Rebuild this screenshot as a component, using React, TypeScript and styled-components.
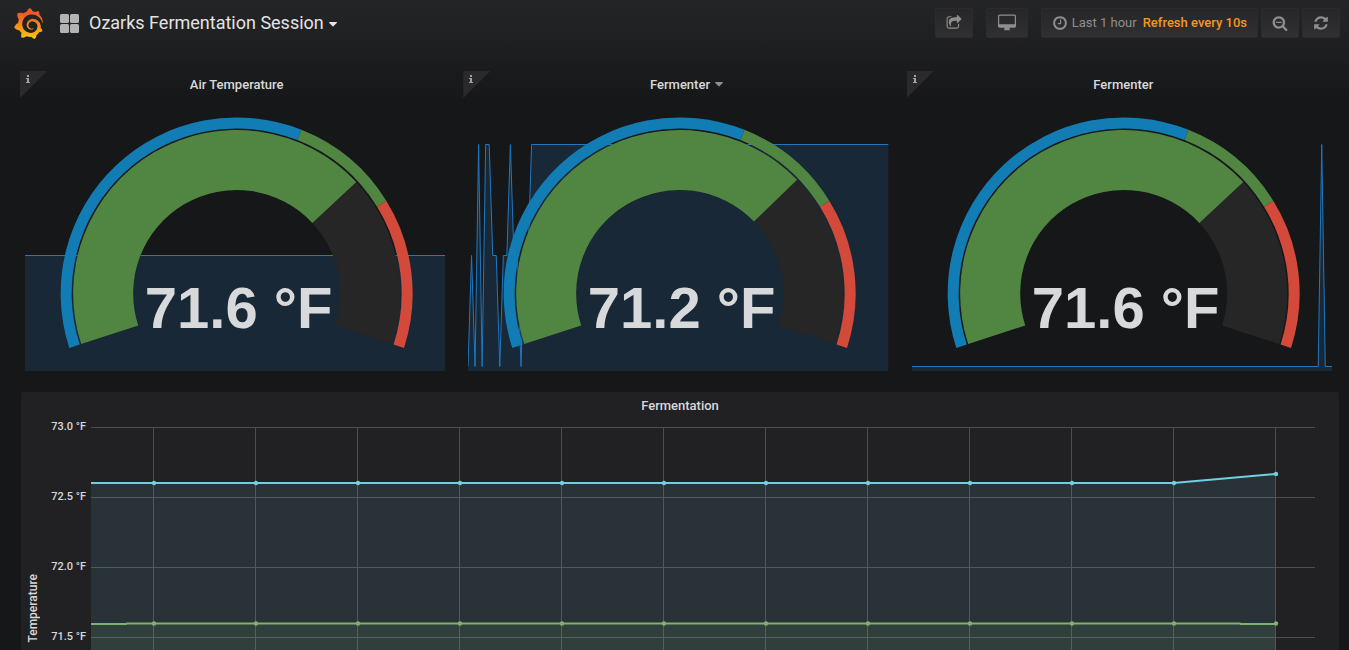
import React from "react";
import styled, { createGlobalStyle } from "styled-components";
import { SiGrafana } from "react-icons/si";

const GlobalStyle = createGlobalStyle`
  *, *::before, *::after { box-sizing: border-box; }
  body {
    margin: 0;
    background: #161719;
    color: #d8d9da;
    font-family: Roboto, "Liberation Sans", sans-serif;
    font-size: 13px;
  }
  button { font: inherit; color: inherit; cursor: pointer; }
`;

const Page = styled.div`
  display: flex;
  flex-direction: column;
  height: 100vh;
  overflow: hidden;
  background: linear-gradient(180deg, #222426 10px, #161719 100px);
`;

const NavBar = styled.header`
  display: flex;
  align-items: center;
  flex: none;
  height: 46px;
  padding: 0 9px 0 13px;
`;

const LogoLink = styled.a`
  display: flex;
  margin-right: 16px;
`;

const Heading = styled.h1`
  margin: 0;
  font-size: 18px;
  font-weight: 400;
`;

const DashboardPicker = styled.button`
  display: flex;
  align-items: center;
  gap: 10px;
  padding: 0;
  border: 0;
  background: none;
  line-height: 30px;
  color: #e3e3e3;
`;

const PickerLabel = styled.span`
  display: flex;
  align-items: center;
  gap: 5px;

  svg { margin-top: 3px; }
`;

const Actions = styled.div`
  display: flex;
  gap: 13px;
  margin-left: auto;
`;

const ButtonGroup = styled.div`
  display: flex;
  gap: 3px;
`;

const NavButton = styled.button<{ $pad?: number }>`
  display: flex;
  align-items: center;
  justify-content: center;
  gap: 4px;
  height: 30px;
  padding: 0 ${(p) => p.$pad ?? 10}px 1px;
  border: 1px solid #2c2c2f;
  border-radius: 2px;
  background: linear-gradient(180deg, #262628, #303032);
  color: #8e8e8e;
  font-weight: 500;
  white-space: nowrap;
`;

const RangeText = styled.span`
  margin-right: 2px;
  font-size: 13px;
  font-weight: 400;
`;

const RefreshText = styled.span`
  color: #f79520;
`;

const Dashboard = styled.main`
  display: flex;
  flex: 1;
  flex-direction: column;
  gap: 10px;
  min-height: 0;
  padding: 25px 9px 0 20px;
`;

const PanelRow = styled.div`
  display: grid;
  flex: none;
  grid-template-columns: repeat(3, 1fr);
  gap: 10px;
`;

const Panel = styled.section`
  position: relative;
  min-width: 0;
  padding-bottom: 11px;
`;

const PanelTitle = styled.h2`
  display: flex;
  align-items: center;
  justify-content: center;
  height: 27px;
  margin: 0;
  font-size: 13px;
  font-weight: 500;
`;

const TitleCaret = styled.span`
  display: flex;
  flex: none;
  margin: 0 -13px 0 5px;
  color: #8e8e8e;
`;

const InfoCorner = styled.button`
  position: absolute;
  top: 0;
  left: 0;
  display: flex;
  align-items: flex-start;
  width: 27px;
  height: 27px;
  padding: 4px 0 0 6px;
  border: 0;
  background: #2a2a2e;
  clip-path: polygon(0 0, 100% 0, 0 100%);
  color: #a0a0a0;
`;

const Stat = styled.div`
  position: relative;
  height: 273px;
`;

const SparkSvg = styled.svg`
  position: absolute;
  top: 0;
  left: 5px;
  width: calc(100% - 13px);
  height: 273px;
`;

const GaugeSvg = styled.svg`
  position: relative;
  display: block;
  width: 100%;
  height: 273px;
`;

const GaugeValue = styled.text`
  fill: #d8d9da;
  font-family: "Liberation Sans", Arial, sans-serif;
  font-size: 58px;
  font-weight: 700;
  text-anchor: middle;
`;

const GraphPanel = styled.section`
  display: flex;
  flex: 1;
  flex-direction: column;
  min-height: 0;
  margin: 0 1px;
  border-radius: 2px 2px 0 0;
  background: #212124;
`;

const GraphBody = styled.div`
  display: flex;
  flex: 1;
  align-items: flex-start;
  min-height: 0;
  padding: 0 24px 0 4px;
`;

const AxisName = styled.div`
  width: 16px;
  padding-top: 155px;
  font-size: 12px;
  font-weight: 500;
  line-height: 16px;
  writing-mode: vertical-rl;

  span {
    display: block;
    transform: rotate(180deg);
  }
`;

const AxisTicks = styled.ol`
  display: flex;
  flex-direction: column;
  width: 50px;
  margin: 0;
  padding: 1px 5px 0 0;
  list-style: none;
  font-size: 11px;
  font-weight: 500;
  line-height: 14px;
  text-align: right;

  li { flex: 0 0 70px; }
  li:last-child { flex-basis: 14px; }
`;

const PlotSvg = styled.svg`
  display: block;
  flex: 1;
  min-width: 0;
  height: 231px;
`;

const FaIcon = ({ d, size, viewBox = "0 0 1792 1792" }: { d: string; size: number; viewBox?: string }) => (
  <svg width={size} height={size} viewBox={viewBox} fill="currentColor" aria-hidden="true">
    <path d={d} />
  </svg>
);

const icons = {
  share:
    "M1472 989v259q0 119-84.5 203.5t-203.5 84.5h-832q-119 0-203.5-84.5t-84.5-203.5v-832q0-119 84.5-203.5t203.5-84.5h255q13 0 22.5 9.5t9.5 22.5q0 27-26 32-77 26-133 60-10 4-16 4h-112q-66 0-113 47t-47 113v832q0 66 47 113t113 47h832q66 0 113-47t47-113v-214q0-19 18-29 28-13 54-37 16-16 35-8 21 9 21 29zm237-496l-384 384q-18 19-45 19-12 0-25-5-39-17-39-59v-192h-160q-323 0-438 131-119 137-74 473 3 23-20 34-8 2-12 2-16 0-26-13-10-14-21-31t-39.5-68.5-49.5-99.5-38.5-114-17.5-122q0-49 3.5-91t14-90 28-88 47-81.5 68.5-74 94.5-61.5 124.5-48.5 159.5-30.5 196.5-11h160v-192q0-42 39-59 13-5 25-5 26 0 45 19l384 384q19 19 19 45t-19 45z",
  desktop:
    "M1728 992v-832q0-13-9.5-22.5t-22.5-9.5h-1600q-13 0-22.5 9.5t-9.5 22.5v832q0 13 9.5 22.5t22.5 9.5h1600q13 0 22.5-9.5t9.5-22.5zm128-832v1088q0 66-47 113t-113 47h-544q0 37 16 77.5t32 71 16 43.5q0 26-19 45t-45 19h-512q-26 0-45-19t-19-45q0-14 16-44t32-70 16-78h-544q-66 0-113-47t-47-113v-1088q0-66 47-113t113-47h1600q66 0 113 47t47 113z",
  clock:
    "M1024 544v448q0 14-9 23t-23 9h-320q-14 0-23-9t-9-23v-64q0-14 9-23t23-9h224v-352q0-14 9-23t23-9h64q14 0 23 9t9 23zm416 352q0-148-73-273t-198-198-273-73-273 73-198 198-73 273 73 273 198 198 273 73 273-73 198-198 73-273zm224 0q0 209-103 385.5t-279.5 279.5-385.5 103-385.5-103-279.5-279.5-103-385.5 103-385.5 279.5-279.5 385.5-103 385.5 103 279.5 279.5 103 385.5z",
  zoomOut:
    "M1088 800v64q0 13-9.5 22.5t-22.5 9.5h-576q-13 0-22.5-9.5t-9.5-22.5v-64q0-13 9.5-22.5t22.5-9.5h576q13 0 22.5 9.5t9.5 22.5zm128 32q0-185-131.5-316.5t-316.5-131.5-316.5 131.5-131.5 316.5 131.5 316.5 316.5 131.5 316.5-131.5 131.5-316.5zm512 832q0 53-37.5 90.5t-90.5 37.5q-54 0-90-38l-343-342q-179 124-399 124-143 0-273.5-55.5t-225-150-150-225-55.5-273.5 55.5-273.5 150-225 225-150 273.5-55.5 273.5 55.5 225 150 150 225 55.5 273.5q0 220-124 399l343 343q37 37 37 90z",
  refresh:
    "M1639 1056q0 5-1 7-64 268-268 434.5t-478 166.5q-146 0-282.5-55t-243.5-157l-129 129q-19 19-45 19t-45-19-19-45v-448q0-26 19-45t45-19h448q26 0 45 19t19 45-19 45l-137 137q71 66 161 102t187 36q134 0 250-65t186-179q11-17 53-117 8-23 30-23h192q13 0 22.5 9.5t9.5 22.5zm25-800v448q0 26-19 45t-45 19h-448q-26 0-45-19t-19-45 19-45l138-138q-148-137-349-137-134 0-250 65t-186 179q-11 17-53 117-8 23-30 23h-199q-13 0-22.5-9.5t-9.5-22.5v-7q65-268 270-434.5t480-166.5q146 0 284 55.5t245 156.5l130-129q19-19 45-19t45 19 19 45z",
};

const Caret = () => (
  <svg width="8" height="5" viewBox="0 0 8 5" fill="currentColor" aria-hidden="true">
    <path d="M.6 0h6.8q.6 0 .6.5 0 .2-.2.4L4.4 4.3q-.4.4-.8 0L.2.9Q0 .7 0 .5 0 0 .6 0z" />
  </svg>
);

const InfoGlyph = () => (
  <svg width="4" height="8" viewBox="0 0 4 8" fill="currentColor" aria-hidden="true">
    <path d="M1 0h2v2H1zM0 3h3v4h1v1H0V7h1V4H0z" />
  </svg>
);

/* Gauge geometry: a 216 degree sweep that starts 18 degrees below horizontal. */
const CX = 177;
const CY = 195.5;

const at = (r: number, deg: number) => {
  const a = ((deg - 18 + 180) * Math.PI) / 180;
  return `${(CX + r * Math.cos(a)).toFixed(2)} ${(CY + r * Math.sin(a)).toFixed(2)}`;
};

const band = (r0: number, r1: number, from: number, to: number) => {
  const large = to - from > 180 ? 1 : 0;
  return `M${at(r1, from)}A${r1} ${r1} 0 ${large} 1 ${at(r1, to)}L${at(r0, to)}A${r0} ${r0} 0 ${large} 0 ${at(r0, from)}Z`;
};

const LOW = 268.5;
const MID = 157.5;
const TOP = 46.5;

type Sample = [index: number, y: number];

const Sparkline = ({ samples }: { samples: Sample[] }) => {
  const pts = samples.map(([i, y]) => `${i},${y}`).join(" ");
  return (
    <SparkSvg viewBox="0 0 119 273" preserveAspectRatio="none" aria-hidden="true">
      <polygon points={`0,273 ${pts} 119,273`} fill="#1f78c1" fillOpacity="0.18" />
      <polyline points={pts} fill="none" stroke="#1f78c1" strokeWidth="1" vectorEffect="non-scaling-stroke" />
    </SparkSvg>
  );
};

type GaugeProps = { title: string; value: string; sweep: number; samples: Sample[]; menu?: boolean };

const GaugePanel = ({ title, value, sweep, samples, menu }: GaugeProps) => (
  <Panel>
    <InfoCorner aria-label={`About ${title}`}>
      <InfoGlyph />
    </InfoCorner>
    <PanelTitle>
      {title}
      {menu && (
        <TitleCaret>
          <Caret />
        </TitleCaret>
      )}
    </PanelTitle>
    <Stat>
      <Sparkline samples={samples} />
      <GaugeSvg viewBox="0 0 354 273">
        <path d={band(103.5, 163.5, 0, 216)} fill="#262626" />
        <path d={band(103.5, 163.5, 0, sweep)} fill="#508642" />
        <path d={band(165, 176, 0, 129.6)} fill="#117db4" />
        <path d={band(165, 176, 129.6, 166.3)} fill="#508642" />
        <path d={band(165, 176, 166.3, 216)} fill="#d44a3a" />
        <GaugeValue x={CX + 2} y="230">
          {value}
        </GaugeValue>
      </GaugeSvg>
    </Stat>
  </Panel>
);

const gauges: GaugeProps[] = [
  { title: "Air Temperature", value: "71.6 °F", sweep: 155, samples: [[0, MID], [119, MID]] },
  {
    title: "Fermenter",
    value: "71.2 °F",
    sweep: 153.9,
    menu: true,
    samples: [
      [0, LOW], [1, MID], [2, LOW], [3, TOP], [4, LOW], [5, TOP], [6, TOP], [7, MID], [8, MID], [9, LOW],
      [10, MID], [11, MID], [12, TOP], [13, MID], [14, MID], [15, LOW], [16, MID], [17, MID], [18, TOP], [119, TOP],
    ],
  },
  {
    title: "Fermenter",
    value: "71.6 °F",
    sweep: 155,
    samples: [[0, LOW], [115, LOW], [116, TOP], [117, LOW], [119, LOW]],
  },
];

const PLOT_W = 1224;
const PLOT_H = 231;
const ticks = ["73.0 °F", "72.5 °F", "72.0 °F", "71.5 °F"];
const columns = Array.from({ length: 12 }, (_, i) => 62.5 + i * 102);
const lastX = columns[11];
const pct = (x: number) => `${(x / PLOT_W) * 100}%`;

const series = [
  { color: "#6ed0e0", line: `0,64 ${columns[10]},64 ${lastX},55`, ys: columns.map((_, i) => (i === 11 ? 55 : 64)) },
  {
    color: "#7eb26d",
    line: `0,205 35,205 36,204.5 1149,204.5 1150,205 ${lastX},205`,
    ys: columns.map(() => 204.5),
  },
];

const TemperaturePlot = () => (
  <PlotSvg role="img" aria-label="Fermentation temperature">
    {ticks.map((t, i) => (
      <line key={t} x1="0" x2="100%" y1={8.5 + i * 70} y2={8.5 + i * 70} stroke="#4d4d50" />
    ))}
    {columns.map((x) => (
      <line key={x} x1={pct(x)} x2={pct(x)} y1="8" y2="100%" stroke="#4d4d50" />
    ))}
    <svg width="100%" height={PLOT_H} viewBox={`0 0 ${PLOT_W} ${PLOT_H}`} preserveAspectRatio="none">
      {series.map((s) => (
        <g key={s.color}>
          <polygon points={`0,${PLOT_H} ${s.line} ${lastX},${PLOT_H}`} fill={s.color} fillOpacity="0.1" />
          <polyline points={s.line} fill="none" stroke={s.color} strokeWidth="2" vectorEffect="non-scaling-stroke" />
        </g>
      ))}
    </svg>
    {series.map((s) =>
      s.ys.map((y, i) => <circle key={`${s.color}${i}`} cx={pct(columns[i] + 0.5)} cy={y} r="2.2" fill={s.color} />),
    )}
  </PlotSvg>
);

const GrafanaLogo = () => (
  <>
    <svg width="0" height="0" aria-hidden="true">
      <linearGradient id="logo-fill" x1="0" y1="0" x2="0" y2="1">
        <stop offset="0.2" stopColor="#f05a28" />
        <stop offset="1" stopColor="#fbca0a" />
      </linearGradient>
    </svg>
    <SiGrafana size={31} fill="url(#logo-fill)" stroke="none" aria-hidden="true" />
  </>
);

const DashboardIcon = () => (
  <svg width="19" height="19" viewBox="0 0 19 19" fill="#b3b3b3" aria-hidden="true">
    {[0, 10].map((y) => [0, 10].map((x) => <rect key={`${x}${y}`} x={x} y={y} width="9" height="9" rx="1.5" />))}
  </svg>
);

export default function App() {
  return (
    <>
      <GlobalStyle />
      <Page>
        <NavBar>
          <LogoLink href="#" aria-label="Home">
            <GrafanaLogo />
          </LogoLink>
          <Heading>
            <DashboardPicker>
              <DashboardIcon />
              <PickerLabel>
                Ozarks Fermentation Session
                <Caret />
              </PickerLabel>
            </DashboardPicker>
          </Heading>
          <Actions>
            <NavButton aria-label="Share dashboard">
              <FaIcon d={icons.share} size={16} />
            </NavButton>
            <NavButton aria-label="Cycle view mode" $pad={11}>
              <FaIcon d={icons.desktop} size={18} viewBox="-64 0 1920 1792" />
            </NavButton>
            <ButtonGroup>
              <NavButton>
                <FaIcon d={icons.clock} size={16} />
                <RangeText>Last 1 hour</RangeText>
                <RefreshText>Refresh every 10s</RefreshText>
              </NavButton>
              <NavButton aria-label="Zoom out">
                <FaIcon d={icons.zoomOut} size={16} />
              </NavButton>
              <NavButton aria-label="Refresh">
                <FaIcon d={icons.refresh} size={16} />
              </NavButton>
            </ButtonGroup>
          </Actions>
        </NavBar>
        <Dashboard>
          <PanelRow>
            {gauges.map((g, i) => (
              <GaugePanel key={i} {...g} />
            ))}
          </PanelRow>
          <GraphPanel>
            <PanelTitle>Fermentation</PanelTitle>
            <GraphBody>
              <AxisName>
                <span>Temperature</span>
              </AxisName>
              <AxisTicks>
                {ticks.map((t) => (
                  <li key={t}>{t}</li>
                ))}
              </AxisTicks>
              <TemperaturePlot />
            </GraphBody>
          </GraphPanel>
        </Dashboard>
      </Page>
    </>
  );
}
